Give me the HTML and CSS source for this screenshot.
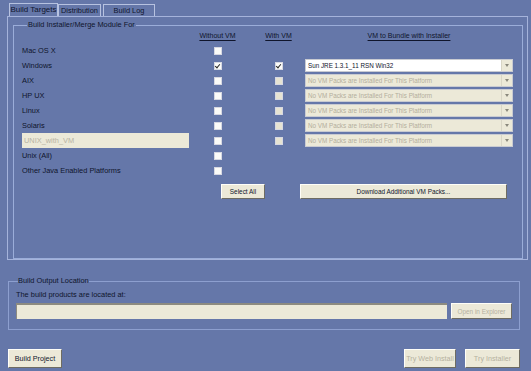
FILE: index.html
```html
<!DOCTYPE html>
<html lang="en">
<head>
<meta charset="UTF-8">
<title>Build Targets</title>
<link rel="stylesheet" href="styles.css">
</head>
<body>

<!-- Tabs -->
<div class="tabs">
  <div class="tab active">Build Targets</div>
  <div class="tab dist">Distribution</div>
  <div class="tab log">Build Log</div>
</div>

<div class="panel">
  <fieldset class="group">
    <legend>Build Installer/Merge Module For</legend>

    <div class="grid">
      <span></span><span class="head">Without VM</span><span></span><span class="head">With VM</span><span></span><span class="head">VM to Bundle with Installer</span>

      <span class="name">Mac OS X</span>
      <span class="cb"></span><span></span><span></span><span></span><span></span>

      <span class="name">Windows</span>
      <span class="cb checked"></span><span></span><span class="cb checked"></span><span></span>
      <span class="combo">Sun JRE 1.3.1_11 RSN Win32<i class="arrow"></i></span>

      <span class="name">AIX</span>
      <span class="cb"></span><span></span><span class="cb off"></span><span></span>
      <span class="combo off">No VM Packs are Installed For This Platform<i class="arrow"></i></span>

      <span class="name">HP UX</span>
      <span class="cb"></span><span></span><span class="cb off"></span><span></span>
      <span class="combo off">No VM Packs are Installed For This Platform<i class="arrow"></i></span>

      <span class="name">Linux</span>
      <span class="cb"></span><span></span><span class="cb off"></span><span></span>
      <span class="combo off">No VM Packs are Installed For This Platform<i class="arrow"></i></span>

      <span class="name">Solaris</span>
      <span class="cb"></span><span></span><span class="cb off"></span><span></span>
      <span class="combo off">No VM Packs are Installed For This Platform<i class="arrow"></i></span>

      <span class="name"><span class="field">UNIX_with_VM</span></span>
      <span class="cb"></span><span></span><span class="cb off"></span><span></span>
      <span class="combo off">No VM Packs are Installed For This Platform<i class="arrow"></i></span>

      <span class="name">Unix (All)</span>
      <span class="cb"></span><span></span><span></span><span></span><span></span>

      <span class="name">Other Java Enabled Platforms</span>
      <span class="cb"></span><span></span><span></span><span></span><span></span>
    </div>

    <div class="actions">
      <button class="btn select-all">Select All</button>
      <button class="btn download">Download Additional VM Packs...</button>
    </div>
  </fieldset>
</div>

<!-- Output location -->
<fieldset class="output">
  <legend>Build Output Location</legend>
  <div class="hint">The build products are located at:</div>
  <div class="path-row">
    <span class="path"></span>
    <button class="btn off explorer">Open in Explorer</button>
  </div>
</fieldset>

<div class="bottom">
  <button class="btn build">Build Project</button>
  <span class="spacer"></span>
  <button class="btn off try-web">Try Web Install</button>
  <button class="btn off try">Try Installer</button>
</div>

</body>
</html>
```

FILE: styles.css
```css
/* Classic installer window, blue theme */
body {
  margin: 0;
  width: 531px;
  height: 371px;
  background: #6577a9;
  font-family: "Liberation Sans", Arial, sans-serif;
  font-size: 7.4px;
  color: #0f152c;
  overflow: hidden;
}

/* tabs */
.tabs {
  display: flex;
  align-items: flex-end;
  height: 16px;
  padding-left: 9px;
  box-sizing: border-box;
}
.tab {
  height: 12px;
  line-height: 12px;
  border: 1px solid #b7c2e0;
  border-bottom: none;
  box-sizing: border-box;
  text-align: center;
  white-space: nowrap;
}
.tab.active {
  height: 13px;
  width: 49px;
  font-size: 8px;
}
.tab.dist {
  width: 43px;
}
.tab.log {
  width: 52px;
  margin-left: 2px;
}

.panel {
  margin-left: 7px;
  width: 521px;
  height: 244px;
  border: 1px solid #a5b3db;
  box-sizing: border-box;
  padding: 3px 4px 0 5px;
}

fieldset {
  margin: 0;
  border: 1px solid #9badd9;
  box-sizing: border-box;
}
legend {
  padding: 0 1px;
  line-height: 10px;
}

.group {
  height: 239px;
  padding: 0 0 0 8px;
}
.group legend {
  margin-left: 5px;
}

/* platform grid */
.grid {
  display: grid;
  grid-template-columns: 178px 35px 26px 35px 9px 208px;
  grid-auto-rows: 15px;
  align-items: center;
  margin-top: -2px;
}
.head {
  justify-self: center;
  font-size: 7px;
  text-decoration: underline;
  text-underline-offset: 2px;
  white-space: nowrap;
}
.name {
  white-space: nowrap;
}
.cb {
  justify-self: center;
  width: 8px;
  height: 8px;
  background: #fbfbf8;
  border: 1px solid #d6d8e2;
  box-sizing: border-box;
  position: relative;
}
.cb.off {
  background: #e6e3d2;
}
.cb.checked::after {
  content: "";
  position: absolute;
  left: 1px;
  top: 0;
  width: 2px;
  height: 4px;
  border: solid #2a2a2a;
  border-width: 0 1.5px 1.5px 0;
  transform: rotate(40deg);
}

.combo {
  display: flex;
  align-items: center;
  height: 13px;
  padding-left: 2px;
  background: #fff;
  border: 1px solid #c9cbd2;
  box-sizing: border-box;
  font-size: 6.3px;
  white-space: nowrap;
}
.combo.off {
  background: #ece9d8;
  color: #b3ae9c;
}
.arrow {
  margin-left: auto;
  width: 11px;
  height: 11px;
  background: #ece9d8;
  border-left: 1px solid #d9d6c6;
  box-sizing: border-box;
  position: relative;
}
.arrow::after {
  content: "";
  position: absolute;
  left: 3px;
  top: 4px;
  border: 2px solid transparent;
  border-top: 3px solid #8a887c;
}

.field {
  display: block;
  width: 167px;
  height: 15px;
  line-height: 15px;
  padding-left: 2px;
  background: #ece9d8;
  color: #b7b3a3;
  box-sizing: border-box;
}

/* buttons */
.btn {
  font-family: inherit;
  font-size: 6.4px;
  color: #0f152c;
  background: #ece9d8;
  border: 1px solid;
  border-color: #fffef8 #6e6c62 #6e6c62 #fffef8;
  padding: 0;
  height: 15px;
  white-space: nowrap;
}
.btn.off {
  color: #b5b19f;
}

.actions {
  display: flex;
  margin-top: 6px;
}
.select-all {
  margin-left: 199px;
  width: 44px;
}
.download {
  margin-left: 35px;
  width: 207px;
}

/* output */
.output {
  margin: 16px 0 0 8px;
  width: 512px;
  height: 54px;
  padding: 0 0 0 7px;
  border-color: #8d9fcf;
}
.output legend {
  margin-left: 2px;
  padding: 0;
}
.hint {
  margin-top: 4px;
}
.path-row {
  display: flex;
  margin-top: 4px;
}
.path {
  width: 431px;
  height: 16px;
  background: #ece9d8;
  border-top: 2px solid #8d8b80;
  border-left: 1px solid #8d8b80;
  box-sizing: border-box;
}
.explorer {
  margin-left: 4px;
  width: 61px;
  height: 16px;
}

.bottom {
  display: flex;
  margin: 19px 0 0 8px;
  width: 512px;
}
.bottom .btn {
  height: 19px;
  font-size: 7.2px;
}
.spacer {
  flex: 1;
}
.build {
  width: 54px;
}
.try-web {
  width: 52px;
}
.try {
  width: 55px;
  margin-left: 9px;
}
```
